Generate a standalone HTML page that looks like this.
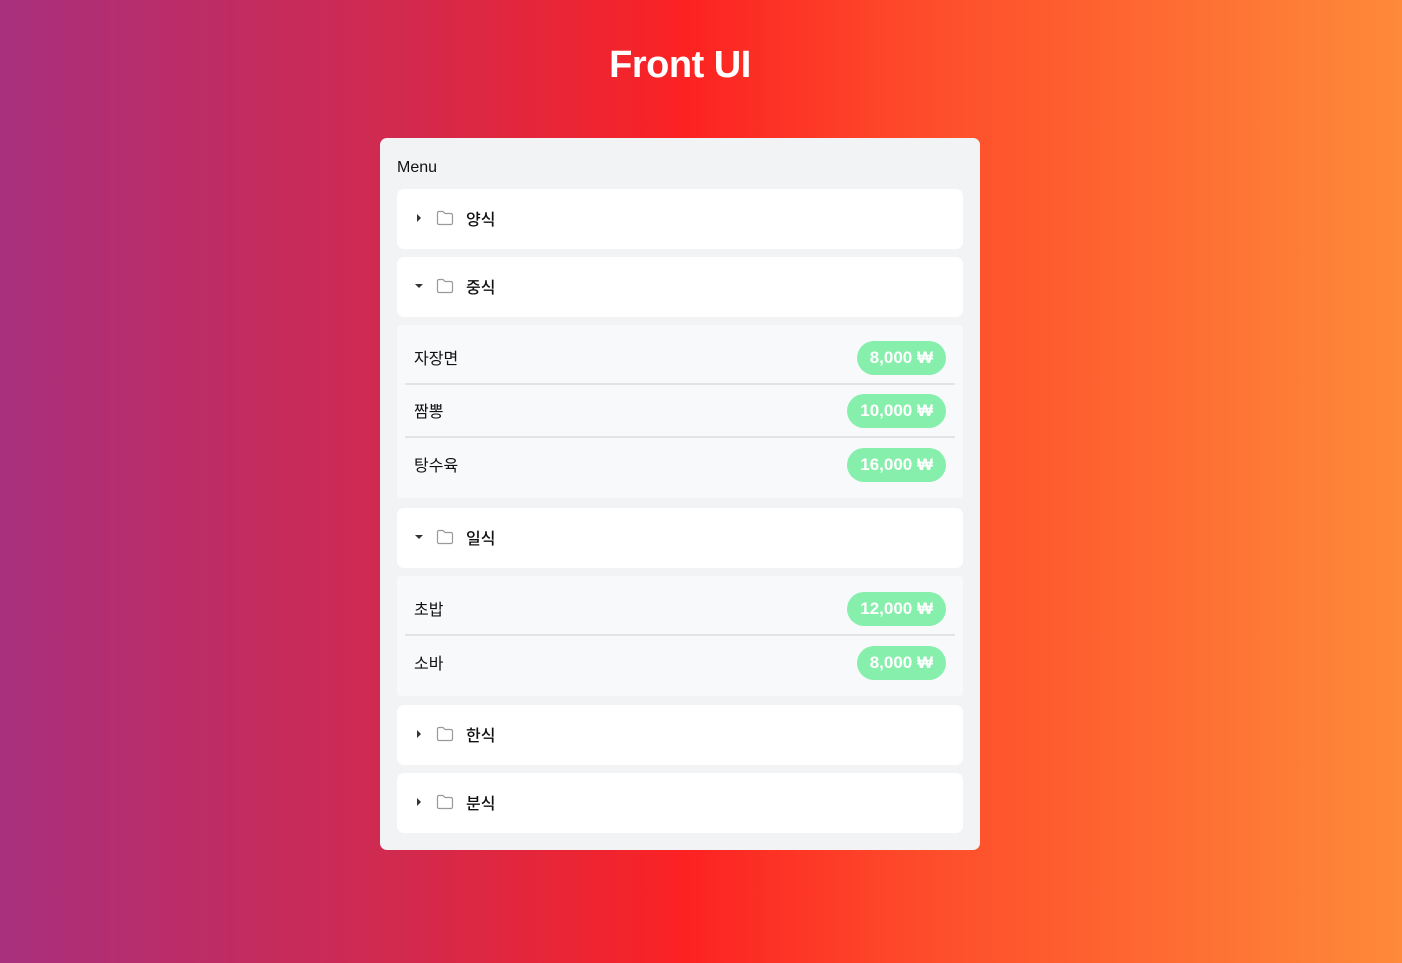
<!DOCTYPE html>
<html><head><meta charset="utf-8"><style>
*{box-sizing:border-box;margin:0;padding:0}
body{width:1402px;height:963px;overflow:hidden;font-family:"Liberation Sans","Noto Sans CJK KR",sans-serif;background:linear-gradient(90deg,#a8307d 0%,#d4294c 30%,#fc2222 49%,#fe4a2a 65%,#fe8a3a 100%);position:relative}
h1{position:absolute;top:44px;left:0;width:1360px;text-align:center;color:#fff;font-size:38px;font-weight:bold;letter-spacing:-0.5px}
.card{position:absolute;left:380px;top:138px;width:600px;height:712px;background:#f2f3f5;border-radius:7px;padding:0 17px}
.title{position:absolute;left:17px;top:21px;font-size:16px;color:#111}
.hdr{position:absolute;left:17px;width:566px;height:60px;background:#fff;border-radius:7px;display:flex;align-items:center;padding-left:17px;padding-bottom:3px;font-size:16px;color:#111}
.hdr span{font-weight:bold;font-family:"Noto Sans CJK KR",sans-serif;font-weight:500}
.tri{width:10px;margin-right:12px;display:flex;justify-content:center}
.hdr svg.f{margin-right:12px}
.panel{position:absolute;left:17px;width:566px;background:#f8f9fb;border-radius:4px;padding:0 8px}
.row{height:53px;display:flex;align-items:center;justify-content:space-between;padding:0 9px;font-size:16px;color:#111;border-bottom:2px solid #e3e4e8}
.row>span:first-child{margin-top:-2px}
.row:last-child{border-bottom:none}
.pill{background:#86efac;color:#fff;font-weight:bold;font-size:17px;height:34px;border-radius:17px;padding:0 13px;display:flex;align-items:center}
</style></head><body>
<h1>Front UI</h1>
<div class="card">
<div class="title">Menu</div>
<div class="hdr" style="top:51px"><div class="tri"><svg width="6" height="10"><path d="M1 1L5 5L1 9Z" fill="#333"/></svg></div><svg class="f" width="18" height="16" viewBox="0 0 18 16"><path d="M1.5 3a1.5 1.5 0 0 1 1.5-1.5h4l2 2h6a1.5 1.5 0 0 1 1.5 1.5v8a1.5 1.5 0 0 1-1.5 1.5H3A1.5 1.5 0 0 1 1.5 13Z" fill="none" stroke="#999" stroke-width="1.2"/></svg><span>양식</span></div>
<div class="hdr" style="top:119px"><div class="tri"><svg width="10" height="6"><path d="M1 1L9 1L5 5Z" fill="#333"/></svg></div><svg class="f" width="18" height="16" viewBox="0 0 18 16"><path d="M1.5 3a1.5 1.5 0 0 1 1.5-1.5h4l2 2h6a1.5 1.5 0 0 1 1.5 1.5v8a1.5 1.5 0 0 1-1.5 1.5H3A1.5 1.5 0 0 1 1.5 13Z" fill="none" stroke="#999" stroke-width="1.2"/></svg><span>중식</span></div>
<div class="panel" style="top:187px;height:173px;padding-top:7px">
<div class="row"><span>자장면</span><span class="pill">8,000 ₩</span></div>
<div class="row"><span>짬뽕</span><span class="pill">10,000 ₩</span></div>
<div class="row"><span>탕수육</span><span class="pill">16,000 ₩</span></div>
</div>
<div class="hdr" style="top:370px"><div class="tri"><svg width="10" height="6"><path d="M1 1L9 1L5 5Z" fill="#333"/></svg></div><svg class="f" width="18" height="16" viewBox="0 0 18 16"><path d="M1.5 3a1.5 1.5 0 0 1 1.5-1.5h4l2 2h6a1.5 1.5 0 0 1 1.5 1.5v8a1.5 1.5 0 0 1-1.5 1.5H3A1.5 1.5 0 0 1 1.5 13Z" fill="none" stroke="#999" stroke-width="1.2"/></svg><span>일식</span></div>
<div class="panel" style="top:438px;height:120px;padding-top:7px">
<div class="row"><span>초밥</span><span class="pill">12,000 ₩</span></div>
<div class="row"><span>소바</span><span class="pill">8,000 ₩</span></div>
</div>
<div class="hdr" style="top:567px"><div class="tri"><svg width="6" height="10"><path d="M1 1L5 5L1 9Z" fill="#333"/></svg></div><svg class="f" width="18" height="16" viewBox="0 0 18 16"><path d="M1.5 3a1.5 1.5 0 0 1 1.5-1.5h4l2 2h6a1.5 1.5 0 0 1 1.5 1.5v8a1.5 1.5 0 0 1-1.5 1.5H3A1.5 1.5 0 0 1 1.5 13Z" fill="none" stroke="#999" stroke-width="1.2"/></svg><span>한식</span></div>
<div class="hdr" style="top:635px"><div class="tri"><svg width="6" height="10"><path d="M1 1L5 5L1 9Z" fill="#333"/></svg></div><svg class="f" width="18" height="16" viewBox="0 0 18 16"><path d="M1.5 3a1.5 1.5 0 0 1 1.5-1.5h4l2 2h6a1.5 1.5 0 0 1 1.5 1.5v8a1.5 1.5 0 0 1-1.5 1.5H3A1.5 1.5 0 0 1 1.5 13Z" fill="none" stroke="#999" stroke-width="1.2"/></svg><span>분식</span></div>
</div>
</body></html>
